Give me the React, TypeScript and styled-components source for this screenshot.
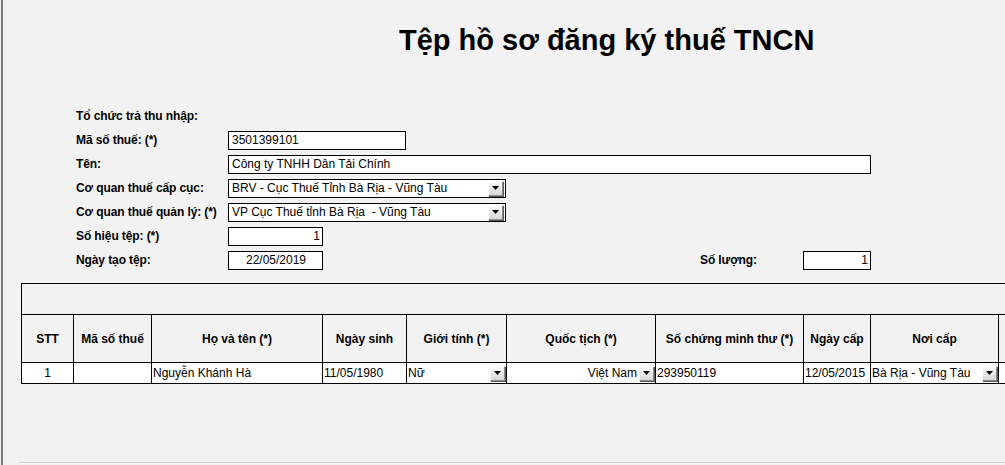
import React from 'react';
import styled, { createGlobalStyle } from 'styled-components';

const GlobalStyle = createGlobalStyle`
  html, body {
    margin: 0;
    padding: 0;
    background: #f2f2f2;
  }
  body {
    font-family: "Liberation Sans", Arial, sans-serif;
    color: #000;
  }
`;

const Frame = styled.div`
  height: 465px;
  margin-left: 1px;
  border-left: 2px solid #7c7c7c;
  display: flex;
  flex-direction: column;
  overflow: hidden;
  box-sizing: border-box;
`;

const Header = styled.header`
  height: 104px;
  padding-left: 396px;
  box-sizing: border-box;
`;

const Title = styled.h1`
  margin: 0;
  padding-top: 23px;
  font-size: 29px;
  line-height: 34px;
  font-weight: bold;
  white-space: nowrap;
`;

const Form = styled.div`
  display: flex;
  flex-direction: column;
  padding-left: 73px;
`;

const Row = styled.div`
  display: flex;
  align-items: center;
  height: 24px;
`;

const Label = styled.div<{ $width?: number; $offset?: number }>`
  width: ${(p) => p.$width ?? 152}px;
  margin-left: ${(p) => p.$offset ?? 0}px;
  flex-shrink: 0;
  font-size: 12px;
  letter-spacing: -0.1px;
  font-weight: bold;
  white-space: nowrap;
`;

const Field = styled.div<{ $width: number; $align?: string }>`
  width: ${(p) => p.$width}px;
  height: 19px;
  box-sizing: border-box;
  border: 1px solid #000;
  background: #fff;
  display: flex;
  align-items: center;
  justify-content: ${(p) => p.$align ?? 'flex-start'};
  padding: 0 2px 0 3px;
  font-size: 12px;
  white-space: pre;
  flex-shrink: 0;
`;

const FieldText = styled.span`
  flex: 1;
`;

const DropButton = styled.span`
  width: 15px;
  height: 15px;
  box-sizing: border-box;
  border: 1px solid;
  border-color: #ffffff #8a8a8a #8a8a8a #ffffff;
  box-shadow: 1px 1px 0 #5a5a5a;
  background: linear-gradient(to bottom, #fbfbfb, #d6d6d6);
  display: flex;
  align-items: center;
  justify-content: center;
  flex-shrink: 0;
`;

const Caret = () => (
  <svg width="7" height="4" viewBox="0 0 7 4">
    <path d="M0 0h7L3.5 4z" fill="#000" />
  </svg>
);

const Select = ({ width, value }: { width: number; value: string }) => (
  <Field $width={width}>
    <FieldText>{value}</FieldText>
    <DropButton>
      <Caret />
    </DropButton>
  </Field>
);

const Sheet = styled.div`
  margin: 11px 0 0 18px;
  display: grid;
  grid-template-columns: 52px 78px 171px 84px 100px 149px 148px 67px 128px 120px;
  grid-template-rows: 31px 48px 21px;
  border-left: 1px solid #000;
  border-top: 1px solid #000;
  width: max-content;
`;

const Band = styled.div`
  grid-column: 1 / -1;
  border-bottom: 1px solid #000;
`;

const HeadCell = styled.div`
  border-right: 1px solid #000;
  border-bottom: 1px solid #000;
  display: flex;
  align-items: center;
  justify-content: center;
  font-size: 12px;
  font-weight: bold;
  white-space: nowrap;
`;

const Cell = styled.div<{ $align?: string }>`
  border-right: 1px solid #000;
  border-bottom: 1px solid #000;
  background: #fff;
  display: flex;
  align-items: center;
  justify-content: ${(p) => p.$align ?? 'flex-start'};
  gap: 2px;
  padding: 0 1px;
  font-size: 12px;
  white-space: nowrap;
  overflow: hidden;
`;

const CellText = styled.span<{ $align?: string }>`
  flex: 1;
  text-align: ${(p) => p.$align ?? 'left'};
`;

const Footer = styled.div`
  margin: auto 0 1px 16px;
  height: 1px;
  border-top: 1px solid #d0d0d0;
  background: #fafafa;
`;

const columns = [
  'STT',
  'Mã số thuế',
  'Họ và tên (*)',
  'Ngày sinh',
  'Giới tính (*)',
  'Quốc tịch (*)',
  'Số chứng minh thư (*)',
  'Ngày cấp',
  'Nơi cấp',
  '',
];

const App = () => (
  <>
    <GlobalStyle />
    <Frame>
      <Header>
        <Title>Tệp hồ sơ đăng ký thuế TNCN</Title>
      </Header>

      <Form>
        <Row>
          <Label>Tổ chức trả thu nhập:</Label>
        </Row>
        <Row>
          <Label>Mã số thuế: (*)</Label>
          <Field $width={178}>3501399101</Field>
        </Row>
        <Row>
          <Label>Tên:</Label>
          <Field $width={643}>Công ty TNHH Dân Tải Chính</Field>
        </Row>
        <Row>
          <Label>Cơ quan thuế cấp cục:</Label>
          <Select width={278} value="BRV - Cục Thuế Tỉnh Bà Rịa - Vũng Tàu" />
        </Row>
        <Row>
          <Label>Cơ quan thuế quản lý: (*)</Label>
          <Select width={278} value="VP Cục Thuế tỉnh Bà Rịa  - Vũng Tàu" />
        </Row>
        <Row>
          <Label>Số hiệu tệp: (*)</Label>
          <Field $width={95} $align="flex-end">1</Field>
        </Row>
        <Row>
          <Label>Ngày tạo tệp:</Label>
          <Field $width={95} $align="center">22/05/2019</Field>
          <Label $width={103} $offset={377}>Số lượng:</Label>
          <Field $width={68} $align="flex-end">1</Field>
        </Row>
      </Form>

      <Sheet>
        <Band />
        {columns.map((c, i) => (
          <HeadCell key={i}>{c}</HeadCell>
        ))}
        <Cell $align="center">1</Cell>
        <Cell />
        <Cell>Nguyễn Khánh Hà</Cell>
        <Cell>11/05/1980</Cell>
        <Cell>
          <CellText>Nữ</CellText>
          <DropButton><Caret /></DropButton>
        </Cell>
        <Cell>
          <CellText $align="right">Việt Nam</CellText>
          <DropButton><Caret /></DropButton>
        </Cell>
        <Cell>293950119</Cell>
        <Cell>12/05/2015</Cell>
        <Cell>
          <CellText>Bà Rịa - Vũng Tàu</CellText>
          <DropButton><Caret /></DropButton>
        </Cell>
        <Cell />
      </Sheet>

      <Footer />
    </Frame>
  </>
);

export default App;
